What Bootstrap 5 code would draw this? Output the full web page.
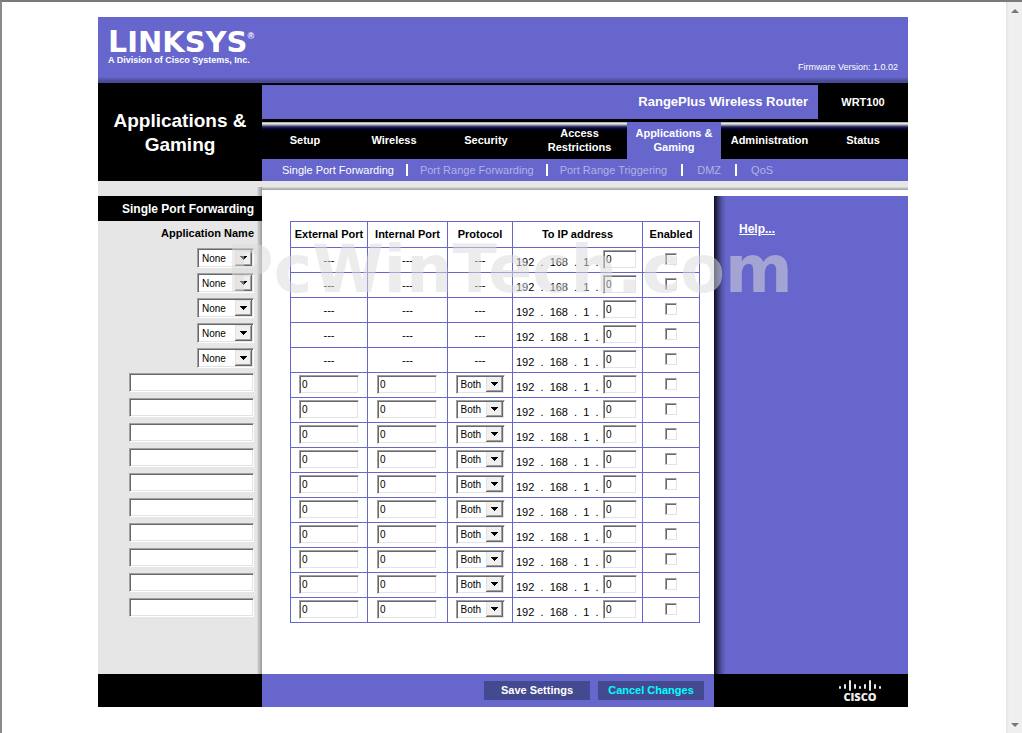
<!DOCTYPE html>
<html lang="en">
<head>
<meta charset="utf-8">
<meta name="viewport" content="width=device-width, initial-scale=1">
<title>Single Port Forwarding</title>
<link href="https://cdn.jsdelivr.net/npm/bootstrap@5.3.0/dist/css/bootstrap.min.css" rel="stylesheet">
<style>
:root{--violet:#6666cc;--panel:#e6e6e6}
body{font-family:"Liberation Sans",Arial,sans-serif;font-size:11px;line-height:14px;color:#000;background:#fff}
a{color:inherit;text-decoration:none}
.window-frame{border-top:2px solid #7a7a7a;border-left:2px solid #8a8a8a}
.scroll-strip{width:18px;border-left:2px solid #fff;background:linear-gradient(90deg,#e3e3e3,#f0f0f0 3px,#efefef);padding:7px 0 6px 1px}
.router{max-width:810px;margin-top:15px}
.side{width:164px}
.help-side{width:194px}
.violet{background:var(--violet)}
.masthead{height:66px;padding:14px 10px 10px;background:linear-gradient(#6666cc 60px,#4a4a99 64px)}
.brand-name{font:bold 29px/22px "DejaVu Sans",sans-serif}
.brand-name .cap{font-size:30px}
.brand-name sup{font:bold 9px/9px "Liberation Sans",sans-serif;top:-13px}
.tagline{font-size:9px;line-height:12px;font-weight:bold}
.firmware{font-size:9px;line-height:12px}
.section-title{font-size:19px;line-height:24px;font-weight:bold;padding-top:2px}
.product{height:34px;font-size:13px;font-weight:bold;padding-right:10px}
.model{width:90px}
.tabs{display:grid;grid-template-columns:86fr 92fr 92fr 95fr 94fr 97fr 90fr;height:37px;background:linear-gradient(#777 0,#eee 1px,#ddd 2px,#9a9ab0 3px,#555580 4px,#222250 5px,#000030 7px,#000 9px)}
.tabs a{display:flex;align-items:center;justify-content:center;text-align:center;color:#fff;font-weight:bold;padding-bottom:2px}
.tabs a.active{background:var(--violet)}
.subtabs{height:22px;padding-left:20px;color:#b2b2e6}
.subtabs .active{color:#fff}
.subtabs li{display:flex;align-items:center}
.subtabs li+li::before{content:"";width:2px;height:12px;background:#fff;margin:0 12px}
.subtabs li.wide::before{margin:0 14px}
.shade-y{background:linear-gradient(90deg,transparent calc(100% - 5px),#ccc calc(100% - 4px),#999) var(--panel)}
.corner{height:15px;padding-top:6px;background:var(--panel)}
.shade-x{height:9px;background:linear-gradient(#e6e6e6 6px,#c4c4c4 7px,#a0a0a0 9px)}
.side-head{height:25px;font-size:12px;padding-right:8px}
.side-label{height:26px;padding:5px 8px 0 0}
.app-slot{height:25px;padding:1px 8px 0 0}
.settings{padding:25px 14px 51px 28px}
.ports{width:410px;table-layout:fixed;border-collapse:collapse}
.ports th,.ports td{border:1px solid var(--violet);padding:0;vertical-align:middle}
.ports th{height:26px;padding-bottom:2px;text-align:center;white-space:nowrap}
.ports td{height:25px;padding-bottom:2px}
.ports td.unset{padding:0}
.fld{height:19px;background:#fff;border:1px solid;border-color:#a0a0a0 #fff #fff #a0a0a0;box-shadow:inset 1px 1px #696969,inset -1px -1px #e3e3e3;border-radius:0;padding:0 2px;font-size:10px;line-height:15px;color:#000;display:block}
.ports .fld{border-right-color:#fff;border-bottom-color:#fff}
.app-text{width:125px}
.port-text{width:60px}
.ip-text{width:34px}
select.fld{appearance:none;height:20px;padding:0 4px;background:#fff url("data:image/svg+xml,%3Csvg xmlns='http://www.w3.org/2000/svg' width='17' height='16' shape-rendering='crispEdges'%3E%3Cpath fill='%23696969' d='M0 0h17v16H0z'/%3E%3Cpath fill='%23e3e3e3' d='M0 0h16v15H0z'/%3E%3Cpath fill='%23a0a0a0' d='M1 1h15v14H1z'/%3E%3Cpath fill='%23f0f0f0' d='M1 1h14v13H1z'/%3E%3Cpath d='M5 6h7v1H5zM6 7h5v1H6zM7 8h3v1H7zM8 9h1v1H8z'/%3E%3C/svg%3E") no-repeat right 1px center}
.app-select{width:57px}
.proto-select{width:49px}
.ports select.fld{height:19px}
.tick{appearance:none;display:block;width:12px;height:12px;margin:0 auto;background:#fff;border:1px solid;border-color:#a0a0a0 #e3e3e3 #e3e3e3 #a0a0a0;box-shadow:inset 1px 1px #696969}
.tick:checked{background:#333}
.ip-cell{padding:0 5px 0 3px}
.ip-cell span{line-height:14px;white-space:pre}
.help-side.body-part{background:linear-gradient(90deg,#0c0c24,#33336a 4px,#5555aa 8px,#6666cc 12px);padding:26px 25px}
.help-link{font-size:12px;text-decoration:underline}
.foot{height:33px}
.act{width:106px;height:19px;border:0;padding:0;background:#434a8f;color:#fff;font-weight:bold;line-height:19px}
.act.cancel{color:#00ffff}
.stamp{position:absolute;left:128px;top:221px;font:bold 65px/64px "DejaVu Sans",sans-serif;color:rgba(218,218,218,.52);white-space:nowrap;pointer-events:none}
</style>
</head>
<body>
<div class="window-frame d-flex min-vh-100">
<div class="flex-grow-1">
<form class="router mx-auto position-relative">
  <header class="masthead d-flex justify-content-between align-items-end text-white">
    <div class="align-self-start">
      <div class="brand-name"><span class="cap">L</span>INKSYS<sup>®</sup></div>
      <div class="tagline">A Division of Cisco Systems, Inc.</div>
    </div>
    <div class="firmware">Firmware Version: 1.0.02</div>
  </header>

  <div class="d-flex bg-black text-white">
    <h1 class="side section-title flex-shrink-0 m-0 d-flex align-items-center justify-content-center text-center">Applications &amp;<br>Gaming</h1>
    <div class="flex-grow-1">
      <div class="d-flex align-items-center" style="padding:2px 0 3px">
        <div class="product violet flex-grow-1 d-flex align-items-center justify-content-end">RangePlus Wireless Router</div>
        <div class="model text-center fw-bold">WRT100</div>
      </div>
      <nav class="tabs">
        <a href="#">Setup</a><a href="#">Wireless</a><a href="#">Security</a><a href="#">Access<br>Restrictions</a><a href="#" class="active">Applications &amp;<br>Gaming</a><a href="#">Administration</a><a href="#">Status</a>
      </nav>
      <ul class="subtabs violet list-unstyled d-flex m-0">
        <li><a href="#" class="active">Single Port Forwarding</a></li>
        <li><a href="#">Port Range Forwarding</a></li>
        <li><a href="#">Port Range Triggering</a></li>
        <li class="wide"><a href="#">DMZ</a></li>
        <li class="wide"><a href="#">QoS</a></li>
      </ul>
    </div>
  </div>

  <div class="d-flex">
    <div class="side corner flex-shrink-0"><div class="shade-y h-100"></div></div>
    <div class="shade-x flex-grow-1"></div>
  </div>

  <div class="d-flex">
    <div class="side shade-y flex-shrink-0" id="apps">
      <div class="side-head bg-black text-white fw-bold d-flex align-items-center justify-content-end">Single Port Forwarding</div>
      <div class="side-label fw-bold text-end">Application Name</div>
    </div>
    <main class="settings flex-grow-1">
      <table class="ports">
        <colgroup><col style="width:77px"><col style="width:80px"><col style="width:65px"><col style="width:130px"><col style="width:57px"></colgroup>
        <thead><tr><th>External Port</th><th>Internal Port</th><th>Protocol</th><th>To IP address</th><th>Enabled</th></tr></thead>
        <tbody id="rules"></tbody>
      </table>
    </main>
    <aside class="help-side body-part flex-shrink-0 text-white"><a href="#" class="help-link fw-bold">Help...</a></aside>
  </div>

  <footer class="d-flex foot">
    <div class="side bg-black flex-shrink-0"></div>
    <div class="violet flex-grow-1 d-flex align-items-center justify-content-end gap-2" style="padding-right:10px">
      <button type="button" class="act">Save Settings</button>
      <button type="button" class="act cancel">Cancel Changes</button>
    </div>
    <div class="help-side bg-black flex-shrink-0 d-flex justify-content-end align-items-center" style="padding-right:26px">
      <svg width="44" height="26" viewBox="0 0 44 26" role="img" aria-label="Cisco">
        <g stroke="#e8e8e8" stroke-width="2" stroke-linecap="round"><path d="M2 9v1M7 7v3M12 3v9M17 7v3M22 9v1M27 7v3M32 3v9M37 7v3M42 9v1"/></g>
        <text x="22" y="23" text-anchor="middle" font-family="Open Sans,sans-serif" font-weight="800" font-size="11" fill="#eee">CISCO</text>
      </svg>
    </div>
  </footer>
  <div class="stamp">PcWinTech.com</div>
</form>
</div>
<div class="scroll-strip d-flex flex-column align-items-center justify-content-between flex-shrink-0" aria-hidden="true">
  <svg width="8" height="4"><path d="M0 4L4 0L8 4z" fill="#777"/></svg>
  <svg width="8" height="4"><path d="M0 0h8L4 4z" fill="#777"/></svg>
</div>
</div>
<script>
const apps = document.getElementById('apps'), rules = document.getElementById('rules');
for (let n = 1; n <= 15; n++) {
  const preset = n <= 5;
  apps.insertAdjacentHTML('beforeend', `<div class="app-slot d-flex justify-content-end">${preset
    ? `<select class="fld app-select" aria-label="Application ${n}"><option>None</option></select>`
    : `<input type="text" class="fld app-text" aria-label="Application name ${n}">`}</div>`);
  const port = (kind, pad) => preset ? '<td class="unset text-center">---</td>'
    : `<td style="padding-left:${pad}px"><input type="text" class="fld port-text" value="0" aria-label="${kind} port ${n}"></td>`;
  rules.insertAdjacentHTML('beforeend', `<tr>${port('External', 8)}${port('Internal', 9)}
    ${preset ? '<td class="unset text-center">---</td>' : `<td><select class="fld proto-select mx-auto" aria-label="Protocol ${n}"><option>Both</option><option>TCP</option><option>UDP</option></select></td>`}
    <td><div class="ip-cell d-flex align-items-end justify-content-between"><span>192  .  168  .  1  .</span><input type="text" class="fld ip-text" value="0" aria-label="IP address ending ${n}"></div></td>
    <td><input type="checkbox" class="tick" aria-label="Enable rule ${n}"></td></tr>`);
}
</script>
<script src="https://cdn.jsdelivr.net/npm/bootstrap@5.3.0/dist/js/bootstrap.bundle.min.js"></script>
</body>
</html>
